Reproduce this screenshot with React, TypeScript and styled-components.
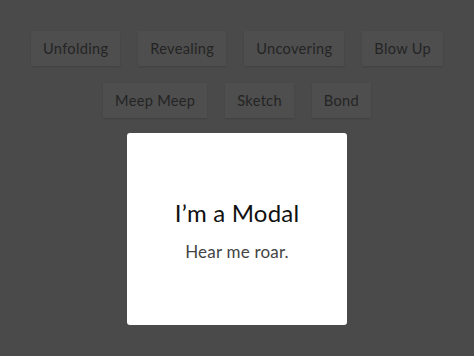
import React from "react";
import styled, { createGlobalStyle } from "styled-components";

const Global = createGlobalStyle`
  html, body { margin: 0; padding: 0; }
  body { background: #4a4a4a; font-family: "Lato", "Noto Sans", sans-serif; }
`;

const Page = styled.div`
  position: relative;
  width: 474px;
  height: 356px;
  overflow: hidden;
  background: #4a4a4a;
  padding-top: 31px;
  box-sizing: border-box;
  display: flex;
  flex-direction: column;
  gap: 17px;
`;

const Row = styled.div`
  display: flex;
  justify-content: center;
  gap: 18px;
`;

const Button = styled.div`
  height: 35px;
  padding: 0 12px;
  display: flex;
  align-items: center;
  background: #4e4e4e;
  box-shadow: 0 1px 2px rgba(0, 0, 0, 0.12);
  color: #242424;
  font-size: 14.6px;
  letter-spacing: 0.3px;
  box-sizing: border-box;
`;

const Modal = styled.div`
  position: absolute;
  left: 127px;
  top: 133px;
  width: 220px;
  height: 192px;
  background: #ffffff;
  border-radius: 3px;
  display: flex;
  flex-direction: column;
  align-items: center;
  justify-content: center;
  padding-top: 2px;
  box-sizing: border-box;
`;

const Title = styled.h2`
  margin: 0;
  font-weight: 400;
  font-size: 24px;
  color: #111;
  letter-spacing: 0.2px;
`;

const Subtitle = styled.p`
  margin: 14px 0 0;
  font-size: 17px;
  color: #444;
  letter-spacing: 0.2px;
`;

const rows = [
  ["Unfolding", "Revealing", "Uncovering", "Blow Up"],
  ["Meep Meep", "Sketch", "Bond"],
];

export default function App() {
  return (
    <Page>
      <Global />
      {rows.map((r, i) => (
        <Row key={i}>
          {r.map((l) => (
            <Button key={l}>{l}</Button>
          ))}
        </Row>
      ))}
      <Modal>
        <Title>I’m a Modal</Title>
        <Subtitle>Hear me roar.</Subtitle>
      </Modal>
    </Page>
  );
}
